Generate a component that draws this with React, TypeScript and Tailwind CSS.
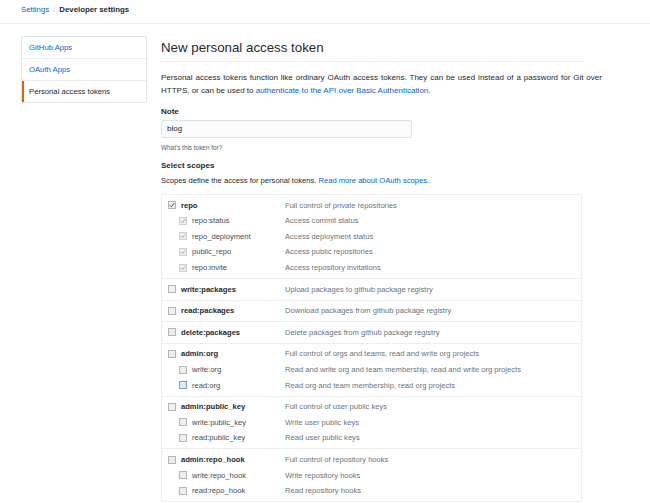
import React from "react";

type Row = { name: string; desc: string; checked?: boolean; disabled?: boolean; focus?: boolean };
type Group = { main: Row; subs: Row[] };

const groups: Group[] = [
  {
    main: { name: "repo", desc: "Full control of private repositories", checked: true },
    subs: [
      { name: "repo:status", desc: "Access commit status", checked: true, disabled: true },
      { name: "repo_deployment", desc: "Access deployment status", checked: true, disabled: true },
      { name: "public_repo", desc: "Access public repositories", checked: true, disabled: true },
      { name: "repo:invite", desc: "Access repository invitations", checked: true, disabled: true },
    ],
  },
  { main: { name: "write:packages", desc: "Upload packages to github package registry" }, subs: [] },
  { main: { name: "read:packages", desc: "Download packages from github package registry" }, subs: [] },
  { main: { name: "delete:packages", desc: "Delete packages from github package registry" }, subs: [] },
  {
    main: { name: "admin:org", desc: "Full control of orgs and teams, read and write org projects" },
    subs: [
      { name: "write:org", desc: "Read and write org and team membership, read and write org projects" },
      { name: "read:org", desc: "Read org and team membership, read org projects", focus: true },
    ],
  },
  {
    main: { name: "admin:public_key", desc: "Full control of user public keys" },
    subs: [
      { name: "write:public_key", desc: "Write user public keys" },
      { name: "read:public_key", desc: "Read user public keys" },
    ],
  },
  {
    main: { name: "admin:repo_hook", desc: "Full control of repository hooks" },
    subs: [
      { name: "write:repo_hook", desc: "Write repository hooks" },
      { name: "read:repo_hook", desc: "Read repository hooks" },
    ],
  },
];

function Box({ checked, disabled, focus }: { checked?: boolean; disabled?: boolean; focus?: boolean }) {
  const stroke = focus ? "#6aa6d8" : disabled ? "#cfcfcf" : "#b5b5b5";
  const fill = focus ? "#dbeaf7" : "#eeeeee";
  const check = disabled ? "#a8a8a8" : "#444";
  return (
    <svg width="8" height="8" viewBox="0 0 8 8" className="shrink-0">
      <rect x="0.5" y="0.5" width="7" height="7" fill={fill} stroke={stroke} />
      {checked && <path d="M1.8 4.2 L3.3 5.7 L6.2 2.2" fill="none" stroke={check} strokeWidth="1" />}
    </svg>
  );
}

function ScopeRow({ row, sub }: { row: Row; sub?: boolean }) {
  return (
    <div className="flex h-[15.6px] items-center">
      <div className={sub ? "flex w-[123px] items-center pl-[17px]" : "flex w-[123px] items-center pl-[6px]"}>
        <Box checked={row.checked} disabled={row.disabled} focus={row.focus} />
        <span className={sub ? "ml-[5px] text-[#444d56]" : "ml-[5px] font-semibold text-[#24292e]"}>{row.name}</span>
      </div>
      <span className="text-[#6a737d]">{row.desc}</span>
    </div>
  );
}

export default function App() {
  return (
    <div
      className="h-[503px] w-[650px] overflow-hidden bg-white text-[7.6px] text-[#24292e]"
      style={{ fontFamily: '"Liberation Sans", Arial, sans-serif' }}
    >
      <div className="flex h-[24px] items-center border-b border-[#eeeeee] pl-[21px] pb-[4px] text-[7.8px]">
        <span className="text-[#0366d6]">Settings</span>
        <span className="mx-[4px] text-[#d1d5da]">/</span>
        <span className="font-semibold text-[#24292e]">Developer settings</span>
      </div>

      <div className="flex pt-[12px]">
        <div className="ml-[21px] w-[126px] self-start rounded-[2px] border border-[#e1e4e8] text-[7.7px]">
          <div className="flex h-[22px] items-center border-b border-[#eaecef] pl-[7px] text-[#0366d6]">GitHub Apps</div>
          <div className="flex h-[22px] items-center border-b border-[#eaecef] pl-[7px] text-[#0366d6]">OAuth Apps</div>
          <div className="flex h-[21px] items-center border-l-2 border-[#e36209] pl-[5px] text-[#24292e]">Personal access tokens</div>
        </div>

        <div className="ml-[14px] w-[422px]">
          <div className="flex h-[26px] items-end border-b border-[#eaecef] pb-[7px]">
            <h1 className="text-[13.3px] font-normal leading-none text-[#24292e]">New personal access token</h1>
          </div>
          <div className="mt-[9px] text-[8px] leading-[13px] text-[#24292e]">
            <div className="whitespace-nowrap [word-spacing:0.7px]">
              Personal access tokens function like ordinary OAuth access tokens. They can be used instead of a password for Git over
            </div>
            <div className="whitespace-nowrap">
              HTTPS, or can be used to <span className="text-[#0366d6]">authenticate to the API over Basic Authentication</span>.
            </div>
          </div>

          <div className="mt-[9px] text-[8px] font-semibold leading-[12px]">Note</div>
          <div className="mt-[2px] flex h-[18px] w-[251px] items-center rounded-[2px] border border-[#dfe2e5] bg-[#fafbfc] pl-[5px] text-[8px]">
            blog
          </div>
          <div className="mt-[5px] text-[6.4px] leading-[9px] text-[#586069]">What's this token for?</div>

          <div className="mt-[8px] text-[8px] font-semibold leading-[12px]">Select scopes</div>
          <div className="mt-[3px] leading-[12px]">
            Scopes define the access for personal tokens. <span className="text-[#0366d6]">Read more about OAuth scopes.</span>
          </div>

          <div className="mt-[7px] w-[421px] border border-b-0 border-[#eeeeee]">
            {groups.map((g) => (
              <div key={g.main.name} className="border-b border-[#eeeeee] py-[2.5px]">
                <ScopeRow row={g.main} />
                {g.subs.map((s) => (
                  <ScopeRow key={s.name} row={s} sub />
                ))}
              </div>
            ))}
          </div>
        </div>
      </div>
    </div>
  );
}
